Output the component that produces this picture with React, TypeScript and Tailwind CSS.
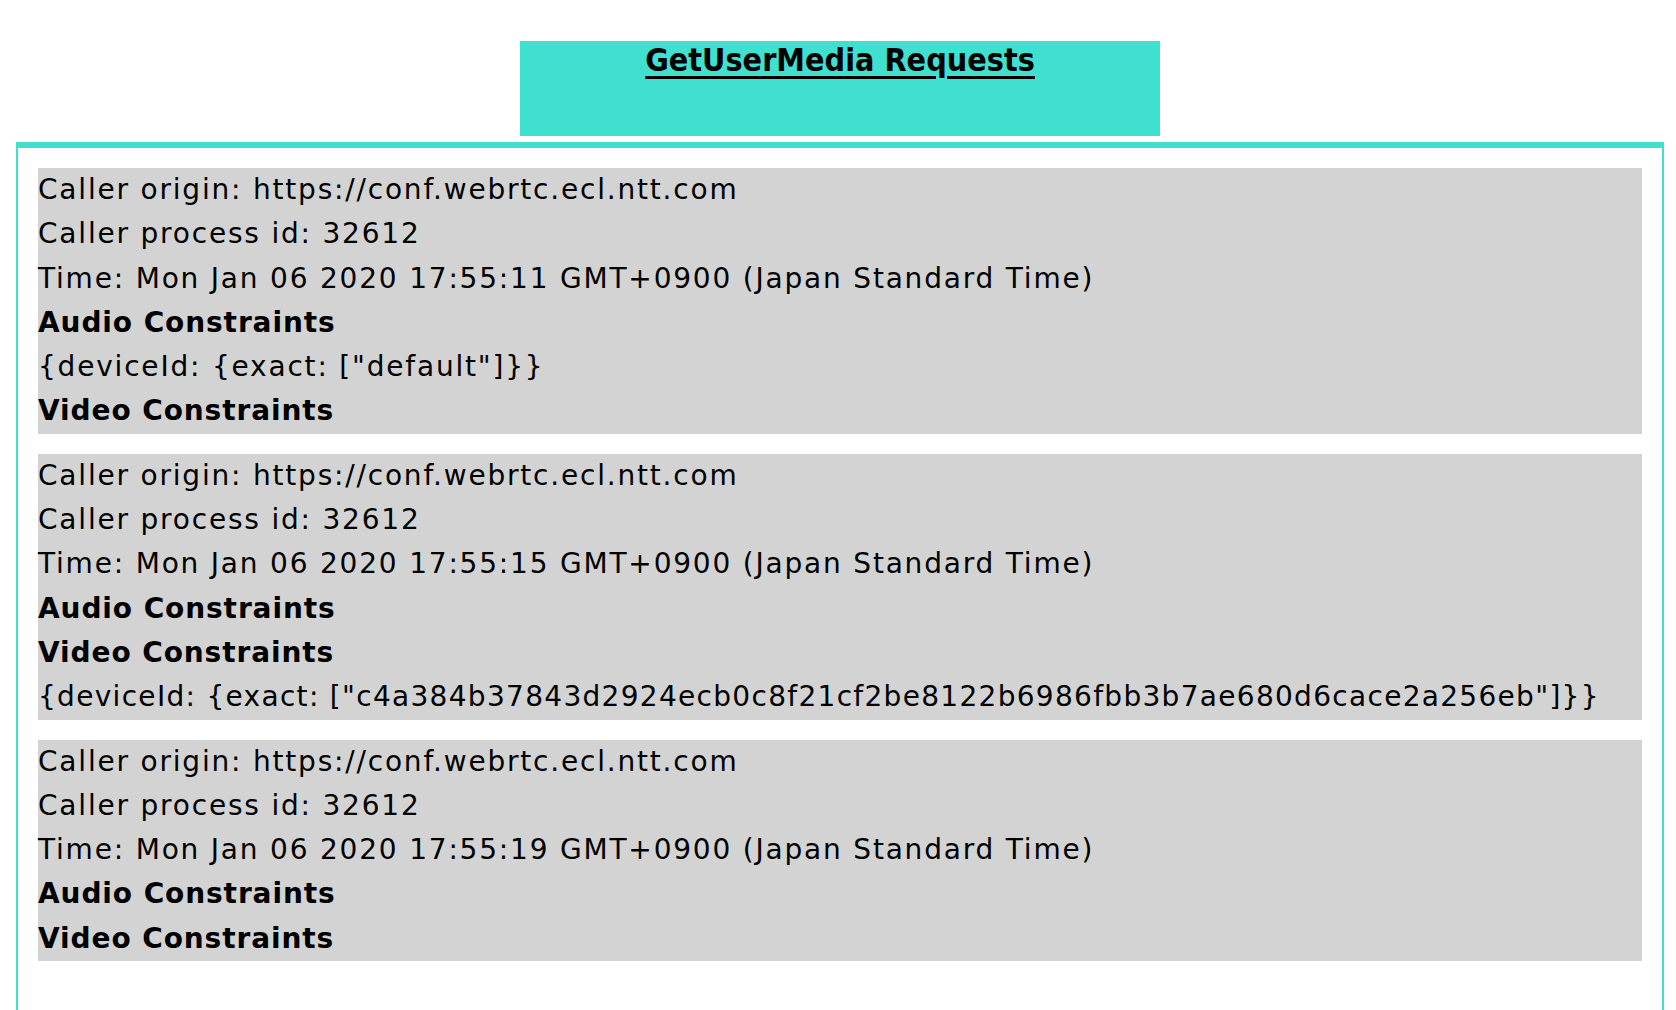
const requests = [
  {
    time: "Mon Jan 06 2020 17:55:11 GMT+0900 (Japan Standard Time)",
    audio: '{deviceId: {exact: ["default"]}}',
    video: "",
  },
  {
    time: "Mon Jan 06 2020 17:55:15 GMT+0900 (Japan Standard Time)",
    audio: "",
    video:
      '{deviceId: {exact: ["c4a384b37843d2924ecb0c8f21cf2be8122b6986fbb3b7ae680d6cace2a256eb"]}}',
  },
  {
    time: "Mon Jan 06 2020 17:55:19 GMT+0900 (Japan Standard Time)",
    audio: "",
    video: "",
  },
];

function Request({ r }: { r: (typeof requests)[number] }) {
  return (
    <div className="bg-[#d3d3d3] text-black text-[28px] leading-[44.3px] tracking-[1.8px]">
      <div>Caller origin: https://conf.webrtc.ecl.ntt.com</div>
      <div>Caller process id: 32612</div>
      <div>Time: {r.time}</div>
      <div className="font-bold tracking-[0.9px]">Audio Constraints</div>
      {r.audio && <div>{r.audio}</div>}
      <div className="font-bold tracking-[0.9px]">Video Constraints</div>
      {r.video && <div className="tracking-[1.3px]">{r.video}</div>}
    </div>
  );
}

export default function App() {
  return (
    <div className="min-h-screen bg-white pt-[41px] pl-4 font-['DejaVu_Sans',sans-serif]">
      <div className="ml-[504px] w-[640px] h-[95px] bg-[#40e0d0] text-center">
        <span className="font-['DejaVu_Sans_Condensed','DejaVu_Sans',sans-serif] font-bold text-[32px] leading-[38px] underline underline-offset-[5px] decoration-[3px]">
          GetUserMedia Requests
        </span>
      </div>
      <div className="mt-[6px] w-[1648px] h-[900px] border-[#40e0d0] border-t-[6px] border-x-2 p-5 flex flex-col gap-5">
        {requests.map((r, i) => (
          <Request key={i} r={r} />
        ))}
      </div>
    </div>
  );
}
